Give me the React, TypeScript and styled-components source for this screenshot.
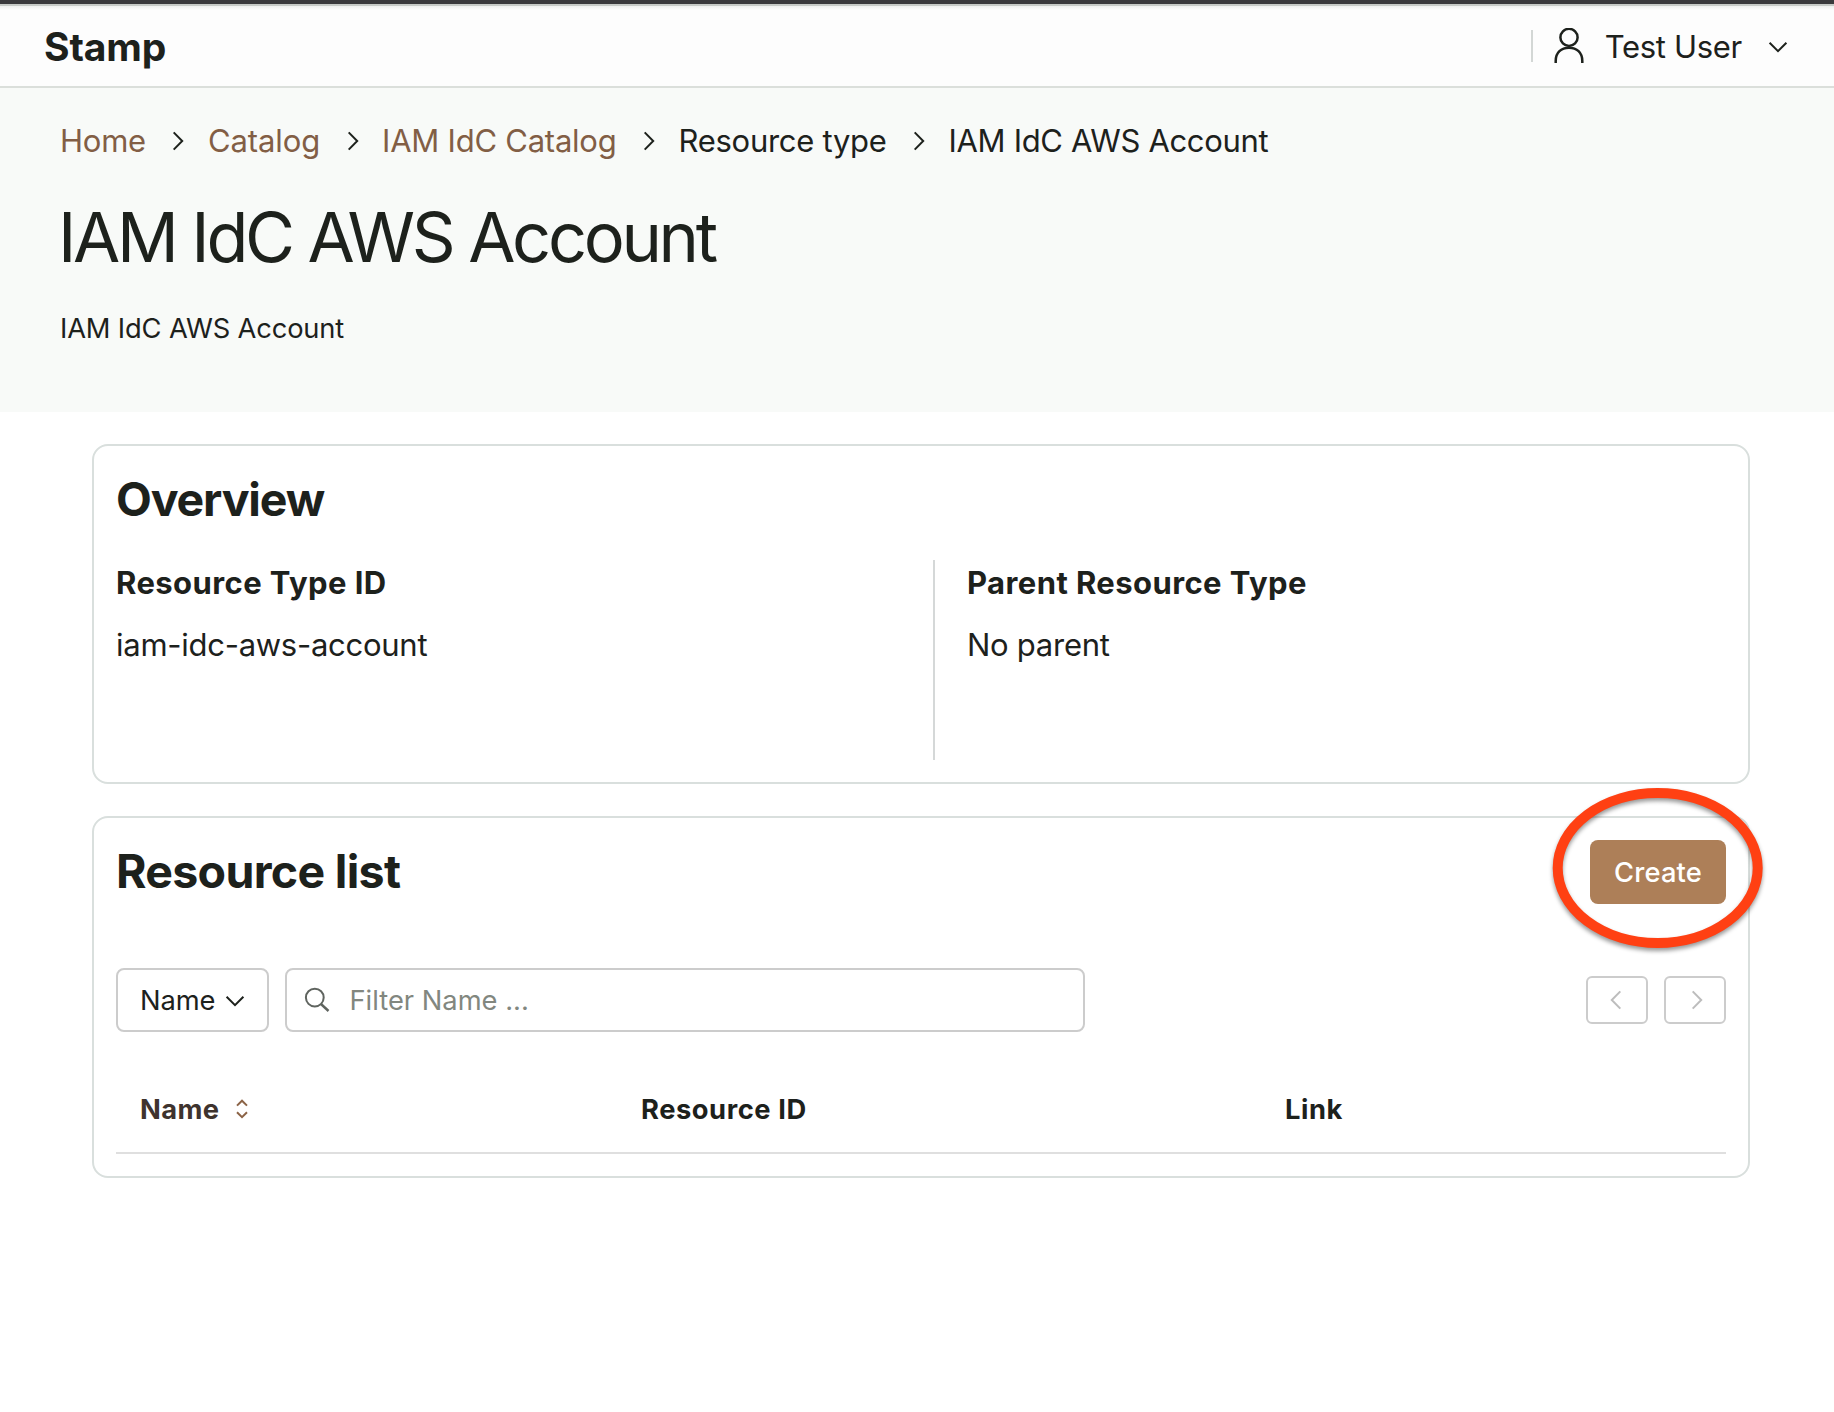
import React from 'react';
import styled, { createGlobalStyle } from 'styled-components';

const color = {
  ink: '#1d211c',
  link: '#825e45',
  accent: '#ad7f58',
  cardBorder: '#d9dfdd',
  controlBorder: '#cccccc',
  headerBg: '#f8faf8',
};

const GlobalStyle = createGlobalStyle`
  *, *::before, *::after { box-sizing: border-box; }
  body {
    margin: 0;
    background: #fff;
    color: ${color.ink};
    font-family: Inter, "Liberation Sans", sans-serif;
  }
  h1, h2, p, dl, dt, dd, ol { margin: 0; padding: 0; }
  button, input { font: inherit; color: inherit; }
`;

const Page = styled.div`
  min-height: 1412px;
  display: flex;
  flex-direction: column;
`;

const WindowEdge = styled.div`
  height: 6px;
  background: #3a3a3c;
  border-bottom: 2px solid #c7cbc7;
`;

const TopBar = styled.header`
  display: flex;
  align-items: center;
  justify-content: space-between;
  height: 82px;
  padding: 2px 46px 0 44px;
  border-bottom: 2px solid #dbdfdb;
  background: linear-gradient(#eff1ef, #fdfdfd 4px);
`;

const Brand = styled.span`
  font-size: 39px;
  font-weight: 700;
  line-height: 48px;
  letter-spacing: -0.1px;
`;

const UserMenu = styled.div`
  display: flex;
  align-items: center;
  font-size: 31px;
  line-height: 38px;
  letter-spacing: -0.3px;
`;

const Separator = styled.span`
  width: 2px;
  height: 32px;
  margin: -2px 20px 0 0;
  background: #d3d7d5;
`;

const UserName = styled.span`
  margin: 0 26px 0 20px;
`;

const Hero = styled.section`
  height: 324px;
  padding: 29px 60px 0;
  background: ${color.headerBg};
`;

const Breadcrumbs = styled.ol`
  display: flex;
  align-items: center;
  list-style: none;
`;

const Crumb = styled.li<{ $link?: boolean; $tracking: number }>`
  display: flex;
  align-items: center;
  font-size: 31px;
  line-height: 48px;
  white-space: nowrap;
  letter-spacing: ${(p) => p.$tracking}px;
  color: ${(p) => (p.$link ? color.link : color.ink)};

  svg {
    margin: -1px 22.5px 0 25.500px;
    color: ${color.ink};
  }
`;

const PageTitle = styled.h1`
  margin: 28px 0 0 -2px;
  font-size: 68.5px;
  font-weight: 400;
  line-height: 89px;
  letter-spacing: -3.36px;
`;

const PageDescription = styled.p`
  margin-top: 25px;
  font-size: 27.3px;
  line-height: 43px;
  letter-spacing: -0.16px;
`;

const Main = styled.main`
  display: flex;
  flex-direction: column;
  gap: 32px;
  padding: 32px 84px 0 92px;
`;

const Card = styled.section`
  padding: 22px;
  border: 2px solid ${color.cardBorder};
  border-radius: 16px;
`;

const CardTitle = styled.h2<{ $tracking: number }>`
  font-size: 46.5px;
  font-weight: 700;
  line-height: 62px;
  letter-spacing: ${(p) => p.$tracking}px;
`;

const Facts = styled.dl`
  display: grid;
  grid-template-columns: 817px 1fr;
  height: 200px;
  margin-top: 30px;
`;

const Fact = styled.div`
  & + & {
    padding-left: 32px;
    border-left: 2px solid #d5d8d8;
  }
`;

const FactLabel = styled.dt`
  font-size: 31px;
  font-weight: 700;
  line-height: 45px;
  letter-spacing: 0.42px;
`;

const FactValue = styled.dd`
  margin-top: 15px;
  font-size: 31px;
  line-height: 49px;
  letter-spacing: -0.27px;
`;

const CardHeader = styled.div`
  display: flex;
  align-items: flex-start;
  justify-content: space-between;
  height: 64px;
`;

const Highlighted = styled.div`
  position: relative;
`;

const Ring = styled.svg`
  position: absolute;
  left: -48px;
  top: -62px;
  pointer-events: none;
  filter: drop-shadow(0 3px 2px rgba(0, 0, 0, 0.4));
`;

const CreateButton = styled.button`
  display: block;
  width: 136px;
  height: 64px;
  padding: 1px 0 0;
  border: 0;
  border-radius: 8px;
  background: ${color.accent};
  color: #fff;
  font-size: 27.3px;
  font-weight: 500;
  letter-spacing: 0.2px;
`;

const Toolbar = styled.div`
  display: flex;
  align-items: center;
  margin-top: 64px;
`;

const FieldSelect = styled.button`
  display: flex;
  align-items: center;
  width: 153px;
  height: 64px;
  margin-right: 16px;
  padding: 1px 0 0 22px;
  border: 2px solid ${color.controlBorder};
  border-radius: 8px;
  background: #fff;
  font-size: 27.3px;
  letter-spacing: -0.1px;

  svg {
    margin: 1px 0 0 10px;
  }
`;

const SearchField = styled.label`
  display: flex;
  align-items: center;
  width: 800px;
  height: 64px;
  padding-left: 17px;
  border: 2px solid ${color.controlBorder};
  border-radius: 8px;
  color: #5f645f;
`;

const SearchInput = styled.input`
  flex: 1;
  height: 58px;
  margin-left: 17.5px;
  padding: 1px 0 0;
  border: 0;
  outline: 0;
  background: transparent;
  font-size: 27.3px;
  letter-spacing: 0;

  &::placeholder {
    color: #82877f;
    opacity: 1;
  }
`;

const Pager = styled.div`
  display: flex;
  gap: 16px;
  margin-left: auto;
`;

const PagerButton = styled.button<{ $nudge: 'left' | 'right' }>`
  display: flex;
  align-items: center;
  justify-content: center;
  width: 62px;
  height: 48px;
  padding: 0;
  padding-${(p) => (p.$nudge === 'left' ? 'right' : 'left')}: 3px;
  border: 2px solid ${color.controlBorder};
  border-radius: 6px;
  background: #fff;
  color: #bdbdbd;
`;

const TableHead = styled.div`
  display: grid;
  grid-template-columns: 501px 644px 1fr;
  margin-top: 32px;
  border-bottom: 2px solid #dfdfdf;
`;

const HeadCell = styled.div<{ $sortable?: boolean }>`
  display: flex;
  align-items: center;
  padding: 24px 24px 21px;
  font-size: 27.3px;
  font-weight: 700;
  line-height: 43px;
  letter-spacing: ${(p) => (p.$sortable ? 0.4 : 0.56)}px;
  color: ${(p) => (p.$sortable ? '#3e332e' : color.ink)};

  svg {
    margin: -1px 0 0 16px;
    color: #8b6346;
  }
`;

const stroke = {
  fill: 'none',
  stroke: 'currentColor',
  strokeWidth: 2,
} as const;

function ChevronRight() {
  return (
    <svg width="14" height="20" viewBox="0 0 14 20" {...stroke}>
      <path d="M2.7 1.4 11.2 10 2.7 18.6" />
    </svg>
  );
}

function ChevronLeft() {
  return (
    <svg width="14" height="20" viewBox="0 0 14 20" {...stroke}>
      <path d="M11.3 1.4 2.8 10l8.5 8.6" />
    </svg>
  );
}

function ChevronDown() {
  return (
    <svg width="20" height="14" viewBox="0 0 20 14" {...stroke}>
      <path d="M1.6 2.8 10 11.2l8.4-8.4" />
    </svg>
  );
}

function UserIcon() {
  return (
    <svg width="32" height="38" viewBox="0 0 32 38" {...stroke} strokeWidth={2.5}>
      <circle cx="16" cy="9.4" r="8.600" />
      <path d="M2.700 35V33C2.700 24.500 8.200 19.700 16 19.700S29.300 24.500 29.300 33v2" />
    </svg>
  );
}

function SearchIcon() {
  return (
    <svg width="28" height="28" viewBox="0 0 28 28" {...stroke}>
      <circle cx="10.800" cy="11.600" r="8.900" />
      <path d="M17 18 24.500 25" strokeWidth="2.400" />
    </svg>
  );
}

function SortIcon() {
  return (
    <svg width="14" height="20" viewBox="0 0 14 20" {...stroke}>
      <path d="M2 6.600 7 1.700l5 4.900M2 13.200l5 4.900 5-4.900" />
    </svg>
  );
}

const crumbs = [
  { label: 'Home', link: true, tracking: -0.23 },
  { label: 'Catalog', link: true, tracking: -0.1 },
  { label: 'IAM IdC Catalog', link: true, tracking: -0.24 },
  { label: 'Resource type', link: false, tracking: -0.28 },
  { label: 'IAM IdC AWS Account', link: false, tracking: -0.34 },
];

export default function App() {
  return (
    <Page>
      <GlobalStyle />
      <WindowEdge />
      <TopBar>
        <Brand>Stamp</Brand>
        <UserMenu>
          <Separator />
          <UserIcon />
          <UserName>Test User</UserName>
          <ChevronDown />
        </UserMenu>
      </TopBar>

      <Hero>
        <Breadcrumbs>
          {crumbs.map((crumb, i) => (
            <Crumb key={crumb.label} $link={crumb.link} $tracking={crumb.tracking}>
              {crumb.label}
              {i < crumbs.length - 1 && <ChevronRight />}
            </Crumb>
          ))}
        </Breadcrumbs>
        <PageTitle>IAM IdC AWS Account</PageTitle>
        <PageDescription>IAM IdC AWS Account</PageDescription>
      </Hero>

      <Main>
        <Card>
          <CardTitle $tracking={-1.15}>Overview</CardTitle>
          <Facts>
            <Fact>
              <FactLabel>Resource Type ID</FactLabel>
              <FactValue>iam-idc-aws-account</FactValue>
            </Fact>
            <Fact>
              <FactLabel>Parent Resource Type</FactLabel>
              <FactValue>No parent</FactValue>
            </Fact>
          </Facts>
        </Card>

        <Card>
          <CardHeader>
            <CardTitle $tracking={-0.7}>Resource list</CardTitle>
            <Highlighted>
              <CreateButton>Create</CreateButton>
              <Ring width="232" height="180" viewBox="0 0 232 180">
                <ellipse cx="115.700" cy="90" rx="100" ry="75" fill="none" stroke="#ff4013" strokeWidth="10" />
              </Ring>
            </Highlighted>
          </CardHeader>
          <Toolbar>
            <FieldSelect>
              Name
              <ChevronDown />
            </FieldSelect>
            <SearchField>
              <SearchIcon />
              <SearchInput placeholder="Filter Name ..." />
            </SearchField>
            <Pager>
              <PagerButton $nudge="left" aria-label="Previous page">
                <ChevronLeft />
              </PagerButton>
              <PagerButton $nudge="right" aria-label="Next page">
                <ChevronRight />
              </PagerButton>
            </Pager>
          </Toolbar>
          <TableHead>
            <HeadCell $sortable>
              Name
              <SortIcon />
            </HeadCell>
            <HeadCell>Resource ID</HeadCell>
            <HeadCell>Link</HeadCell>
          </TableHead>
        </Card>
      </Main>
    </Page>
  );
}
